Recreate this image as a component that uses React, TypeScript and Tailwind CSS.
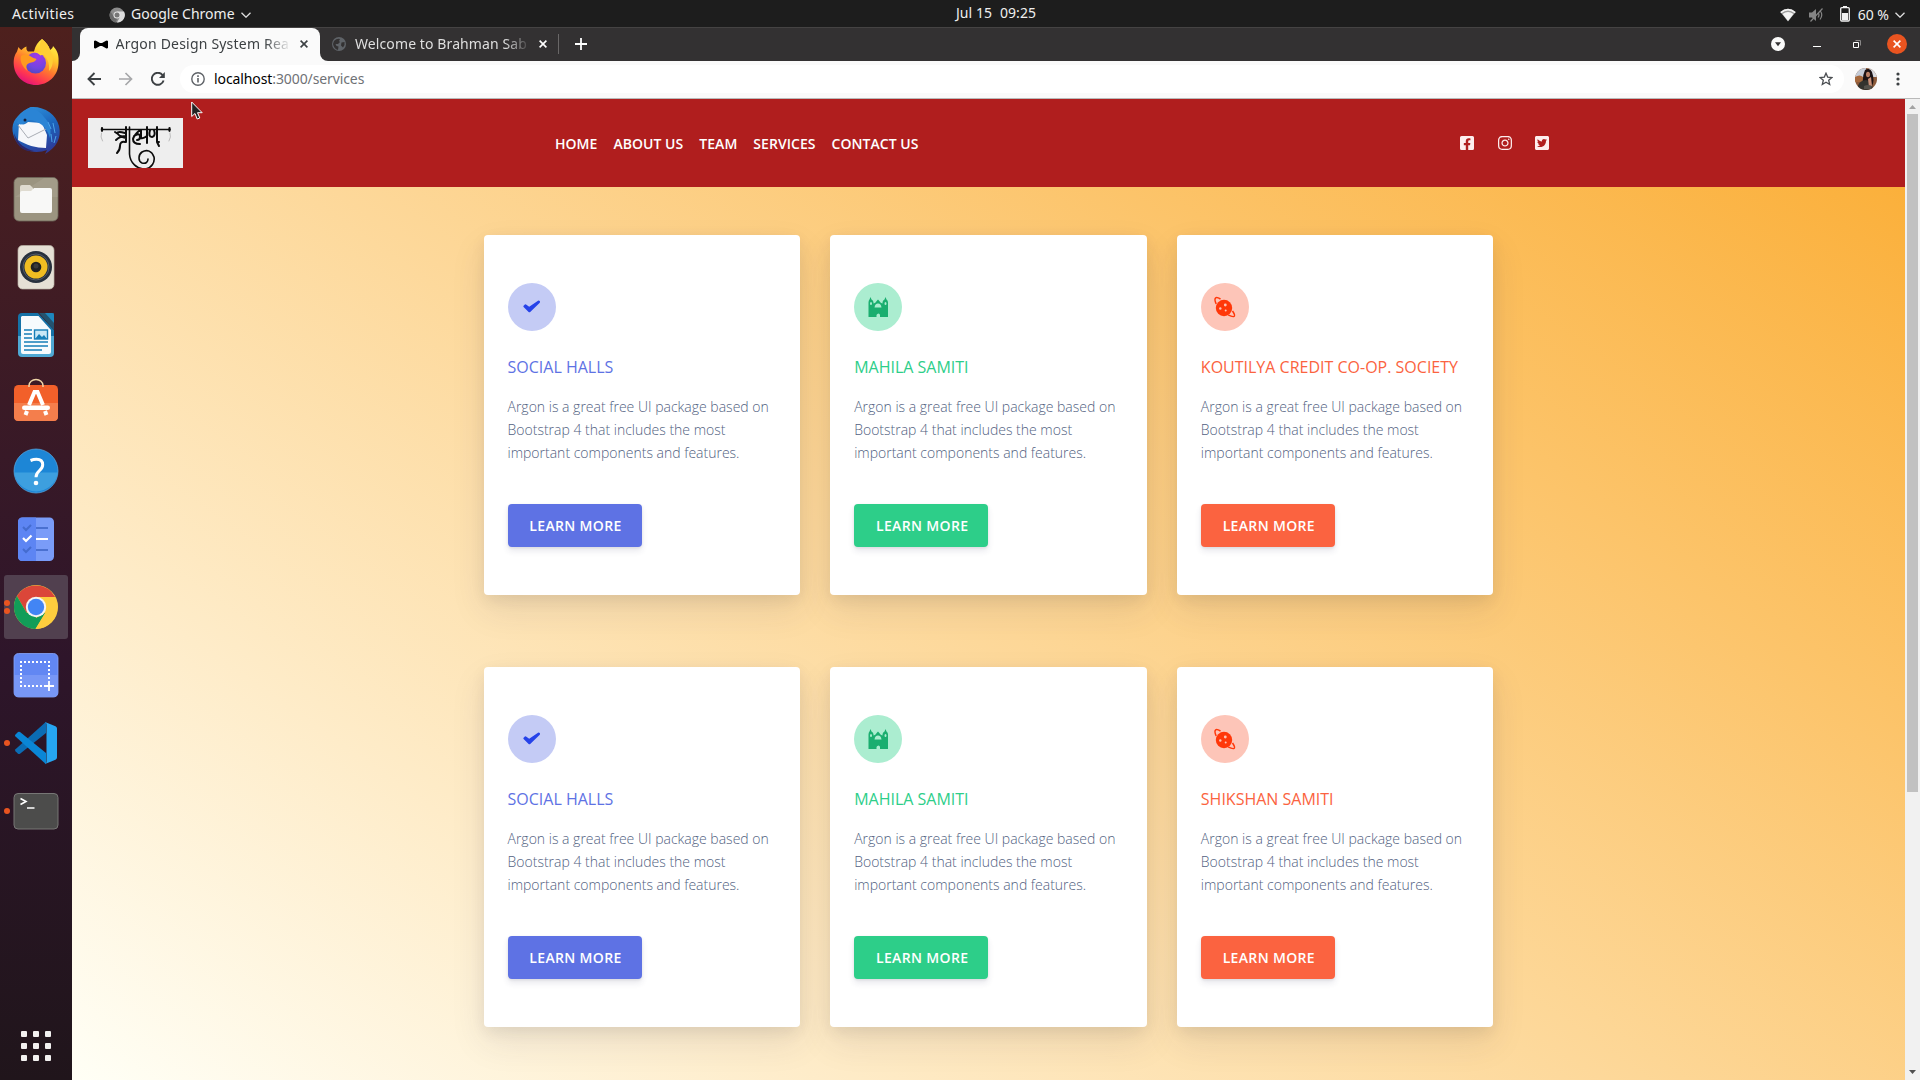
import React from "react";
import { FaFacebookSquare, FaInstagram, FaTwitterSquare } from "react-icons/fa";

const ui = "font-['Noto_Sans','Open_Sans',sans-serif]";

/* ---------- Dock icons (64 x 64 slots) ---------- */

const Firefox = () => (
  <>
    <defs>
      <linearGradient id="ffBody" x1="0.8" y1="0.05" x2="0.3" y2="1">
        <stop offset="0" stopColor="#fff24a" />
        <stop offset="0.3" stopColor="#ffc82c" />
        <stop offset="0.55" stopColor="#ff7a2e" />
        <stop offset="0.8" stopColor="#ff3750" />
        <stop offset="1" stopColor="#e1107e" />
      </linearGradient>
      <radialGradient id="ffCore" cx="0.6" cy="0.2" r="0.9">
        <stop offset="0" stopColor="#a238e8" />
        <stop offset="0.6" stopColor="#7245e0" />
        <stop offset="1" stopColor="#4c49b8" />
      </radialGradient>
    </defs>
    <path fill="url(#ffBody)" d="M38 8c4 3 7 7 8 11 2-1 3-3 3-4 5 5 6 10 5.500 17.500C54 45 44 54 32 54S10 45 9.700 32.500c-.1-6 1.300-9 3.300-12L14.500 16c1 1.500 2 2.500 3 3 1.500-1.700 3.500-3 5-3.500-.3 2 0 4 1.500 5h6c1.500-6 4-10 8-12.500z" />
    <circle cx="31.500" cy="32" r="10.500" fill="url(#ffCore)" />
    <path fill="#ff9a1f" d="M17 25c4-2 8-1 9 0 2 1.500 5 2.500 6.500 3-1 3-5 3.500-7 4-3 .8-4 3.500-2 8-5-4-8-10-6.500-15z" />
    <path fill="#ffcf35" d="M30 21c5-1 9 0 11.500 3-2 0-4-.3-5 .5-2.500-2.200-4.500-3-6.500-3.500zM38 8c4 3 7 7 8 11 4 6 4 16-1 21 1-8-2-14-7-18-3-4-3-9 0-14z" />
  </>
);

const Thunderbird = () => (
  <>
    <defs>
      <linearGradient id="tbBody" x1="0.2" y1="0" x2="0.6" y2="1">
        <stop offset="0" stopColor="#2f93dd" />
        <stop offset="0.5" stopColor="#1c66bd" />
        <stop offset="1" stopColor="#2e3a98" />
      </linearGradient>
    </defs>
    <path fill="url(#tbBody)" d="M27 8c13-1 25 7 28 19 3 12-3 22-14 28l2-4c-10 4-25 2-31-9C7 33 7 24 14 17c3-4 8-7 13-9z" />
    <path fill="#2e2768" d="M10 34c4 12 12 16 20 18-9 2-19-5-20-18z" />
    <path fill="#f6f7fa" d="M15 24c3 2 6 2 9-1l14 1 5 12-1 13c-10 0-20-3-28-8z" />
    <path fill="none" stroke="#a9adb5" strokeWidth="1" d="M14 26l10 13 18-9" />
    <path fill="#2a84d5" d="M27 8c5 3 10 5 13 10 5 5 8 11 6 21-2-7-6-13-13-16-5-2-9-3-11 0-3 3-7 3-9 1 1-7 7-13 14-16z" />
    <circle cx="21" cy="21" r="1.500" fill="#15203d" />
    <path fill="none" stroke="#4ba5e9" strokeWidth="1" d="M44 23l3 7m2-6l2 10m-4 1l1 8m4-6l-2 7" />
  </>
);

const Files = () => (
  <>
    <rect x="10" y="10.500" width="44" height="43.500" rx="5" fill="#9b9480" stroke="#6f6a5c" strokeWidth="0.8" />
    <path d="M11 30L40 11h9q4.500 0 4.500 4v15z" fill="#a9a28f" opacity="0.6" />
    <path fill="#dfdbd0" d="M16 20q0-2 2-2h8l3 3v6H16z" />
    <path fill="#f8f8f7" d="M16 26q0-2 2-2h9l3-3h16q2 0 2 2v21q0 2-2 2H18q-2 0-2-2z" />
  </>
);

const Speaker = () => (
  <>
    <rect x="14" y="10.500" width="36" height="43.500" rx="4.500" fill="#e5e0d5" stroke="#b9b3a6" strokeWidth="0.7" />
    <circle cx="32" cy="32" r="16" fill="#27303d" />
    <circle cx="32" cy="32" r="13" fill="none" stroke="#545c68" strokeWidth="1" />
    <circle cx="32" cy="32" r="11.500" fill="#f0bd22" />
    <circle cx="32" cy="32" r="5.300" fill="#222" />
    <circle cx="32" cy="31" r="2.500" fill="#3b3b3b" />
  </>
);

const Writer = () => (
  <>
    <path fill="#1572a7" d="M18 10h16l16 17v9H14V14q0-4 4-4z" />
    <path fill="#4fa9d4" d="M14 33h36v17q0 4-4 4H18q-4 0-4-4z" />
    <path fill="#24536f" d="M35 10l15 17V10z" />
    <path fill="#1e87be" d="M41 10h7q2 0 2 2v8z" />
    <path fill="#f7fbfd" d="M18 13h16.500L47 27v22q0 2-2 2H19q-2 0-2-2V14z" />
    <path stroke="#167fb8" strokeWidth="1.700" d="M20 27h8m-8 4h8m-8 4h8m-8 4h24m-24 4h24m-24 4h18" />
    <rect x="30.500" y="27" width="13" height="9" fill="#c9e8f6" stroke="#167fb8" strokeWidth="1.400" />
    <path fill="#167fb8" d="M31 36l4-5 3 3 2-2 3 4z" />
  </>
);

const Software = () => (
  <>
    <rect x="10" y="14" width="44" height="36" rx="4.500" fill="#f2602a" />
    <path fill="#f47e4c" d="M10 32h44v13.500q0 4.500-4.500 4.500h-35Q10 50 10 45.500z" />
    <path fill="none" stroke="#f0d6a8" strokeWidth="1.500" d="M25 16v-1.500a7 6 0 0 1 14 0V16" />
    <path fill="none" stroke="#fff" strokeWidth="4" d="M21.500 44l1.500-4M25 34l5.500-13h3L39 34m2 6l1.500 4" />
    <rect x="18" y="34.500" width="28" height="4.500" rx="2.200" fill="#fff" />
  </>
);

const Help = () => (
  <>
    <circle cx="32" cy="32" r="22" fill="#1d86d6" stroke="#57aae5" strokeWidth="0.7" />
    <path fill="#3d9fdf" d="M10.200 33.500h43.600a22 22 0 0 1-43.600 0z" />
    <path fill="none" stroke="#fff" strokeWidth="3" d="M26.500 21.500q3-1.200 6-1.200 6.200 0 6.200 5.500 0 3.200-3.500 6-3.200 2.600-3.200 6.500" />
    <circle cx="32" cy="44" r="2.300" fill="#fff" />
  </>
);

const Todo = () => (
  <>
    <rect x="14" y="10.500" width="36" height="43.500" rx="4.500" fill="#7a9cf8" />
    <path fill="#5d85f3" d="M18.500 10.500H32V54H18.500Q14 54 14 49.500V15q0-4.500 4.500-4.500z" />
    <path fill="none" stroke="#3f65c5" strokeWidth="2" d="M19 20l3 3 5-5m-8 24l3 3 5-5M32 21h12M32 43h12" opacity="0.8" />
    <path fill="none" stroke="#fff" strokeWidth="2.200" d="M19 31l3 3 5.500-5.500M32 32h12" />
  </>
);

const Chrome = () => (
  <>
    <circle cx="32" cy="32" r="22" fill="#fdcd3e" />
    <path fill="#db4639" d="M32 32L22.500 37.500 12.900 21A22 22 0 0 1 51.100 22H32z" />
    <path fill="#129d58" d="M12.900 21l9.600 16.500L32 42l-.5 12A22 22 0 0 1 12.900 21z" />
    <path fill="#129d58" d="M22.500 37.500L32 43l9.500-5.500L31.500 54z" />
    <path fill="#fdcd3e" d="M51.100 22A22 22 0 0 1 31.500 54l10-16.500V22z" />
    <circle cx="32" cy="32" r="10.200" fill="#f4f4f4" />
    <circle cx="32" cy="32" r="8.200" fill="#4285f4" />
  </>
);

const Screenshot = () => (
  <>
    <rect x="10" y="10.500" width="44" height="43.500" rx="4.500" fill="#6287f3" stroke="#86a4fa" strokeWidth="0.8" />
    <path fill="#7897f6" d="M10 32h44v17.500Q54 54 49.500 54h-35Q10 54 10 49.500z" />
    <path stroke="#fff" strokeWidth="2" strokeDasharray="2 2" fill="none" d="M16 19h30M17 22v22M45 22v16M16 43h24" />
    <path stroke="#fff" strokeWidth="1.800" d="M45 38v10m-5-5h10" />
  </>
);

const VSCode = () => (
  <>
    <path fill="#0b6cb4" d="M42 10.800L11.500 38.200q-1 1 0 2l2.500 2.500q1 .6 2 0L42 22z" />
    <path fill="#0a86d6" d="M42 53.200L11.500 25.500q-1-1 0-2L14 21q1-.7 2 0l26 21z" />
    <path fill="#26a6f2" d="M41 11l10.500 4.300q1.500.7 1.500 2.200v29q0 1.500-1.500 2.200L41 53q1.500-.5 1.500-2.500v-37Q42.500 11.500 41 11z" />
  </>
);

const Terminal = () => (
  <>
    <rect x="10" y="14.500" width="44" height="35.500" rx="4" fill="#4c4c4b" stroke="#777675" strokeWidth="1" />
    <path fill="none" stroke="#fff" strokeWidth="1.600" d="M16.500 19.500l5.500 3-5.500 3M23 29h7.500" />
  </>
);

const dock: { name: string; Art: () => React.ReactElement; dots: number; active?: boolean }[] = [
  { name: "Firefox", Art: Firefox, dots: 0 },
  { name: "Thunderbird", Art: Thunderbird, dots: 0 },
  { name: "Files", Art: Files, dots: 0 },
  { name: "Rhythmbox", Art: Speaker, dots: 0 },
  { name: "Writer", Art: Writer, dots: 0 },
  { name: "Software", Art: Software, dots: 0 },
  { name: "Help", Art: Help, dots: 0 },
  { name: "To Do", Art: Todo, dots: 0 },
  { name: "Chrome", Art: Chrome, dots: 2, active: true },
  { name: "Screenshot", Art: Screenshot, dots: 0 },
  { name: "Code", Art: VSCode, dots: 1 },
  { name: "Terminal", Art: Terminal, dots: 1 },
];

function Dock() {
  return (
    <aside className="flex w-[72px] shrink-0 flex-col items-center justify-between bg-linear-to-b from-[#4e201d] via-[#2e152a] via-60% to-[#20151b] pt-1 pb-[19px]">
      <div className="flex flex-col gap-1">
        {dock.map(({ name, Art, dots, active }) => (
          <div
            key={name}
            className={
              active ? "relative size-16 rounded-[3px] bg-[#51404f]" : "relative size-16"
            }
          >
            <svg viewBox="0 0 64 64" className="size-16" aria-label={name}>
              <Art />
            </svg>
            {dots > 0 && (
              <div className="absolute inset-y-0 left-0 flex flex-col justify-center gap-[2px]">
                {Array.from({ length: dots }, (_, i) => (
                  <span key={i} className="size-1.5 rounded-full bg-[#e95420]" />
                ))}
              </div>
            )}
          </div>
        ))}
      </div>
      <div className="grid grid-cols-3 gap-1.5">
        {Array.from({ length: 9 }, (_, i) => (
          <span key={i} className="size-1.5 rounded-[1px] bg-[#f2f1f0]" />
        ))}
      </div>
    </aside>
  );
}

/* ---------- Desktop top bar ---------- */

const Chevron = ({ className }: { className: string }) => (
  <svg viewBox="0 0 10 6" className={className} fill="none" stroke="#dedede" strokeWidth="1.300">
    <path d="M.5.7L5 5.200 9.500.7" />
  </svg>
);

function TopBar() {
  return (
    <header
      className={`grid h-[27px] grid-cols-[1fr_auto_1fr] items-center bg-[#1d1d1d] text-[14px] leading-[25px] text-[#efefef] ${ui}`}
    >
      <div className="flex items-center pl-3">
        <span className="w-[97px] pb-[2px] tracking-[0.4px]">Activities</span>
        <svg viewBox="0 0 16 16" className="mr-1.5 size-4">
          <circle cx="8" cy="8" r="7.500" fill="#8c8c8c" />
          <path d="M8 4.500h7A7.500 7.500 0 0 1 8 15.500l3-5.500z" fill="#dcdcdc" />
          <path d="M1.500 4.500L5 10l3 1.500-1 4A7.500 7.500 0 0 1 1.500 4.500z" fill="#6b6b6b" />
          <circle cx="8" cy="8" r="3.500" fill="#e6e6e6" />
          <circle cx="8" cy="8" r="2.500" fill="#777" />
        </svg>
        <span className="pb-[2px] tracking-[0.02px]">Google Chrome</span>
        <Chevron className="ml-1.5 h-1.5 w-2.5" />
      </div>
      <div className="relative left-[36px] flex gap-2 pb-1 tracking-[0.05px]">
        <span>Jul 15</span>
        <span>09:25</span>
      </div>
      <div className="flex items-center justify-end pr-[15px]">
        <svg viewBox="0 0 16 14" className="mr-[13px] h-3.5 w-4">
          <path d="M.3 4Q8-2.500 15.700 4L8 13.500z" fill="#9a9a9a" />
          <path d="M.3 4Q8-2.500 15.700 4l-1 1.200Q8 0 1.300 5.200z" fill="#f2f2f2" />
          <path d="M2.500 6Q8 2 13.500 6L8 13z" fill="#f2f2f2" />
        </svg>
        <svg viewBox="0 0 15 14" className="mr-4 h-3.5 w-[15px]">
          <path d="M0 4.500h3L7 1v12L3 9.500H0z" fill="#858585" />
          <path d="M9 4.500q2 2.500 0 5M11 2.500q3.500 4.500 0 9M1.500 13.500L13.500.5" fill="none" stroke="#858585" strokeWidth="1.200" />
        </svg>
        <svg viewBox="0 0 10 16" className="mr-2 mb-[2px] h-4 w-2.5">
          <path d="M3 0h4v1.500H3z" fill="#f2f2f2" />
          <rect x=".7" y="1.700" width="8.600" height="13.300" rx="1" fill="none" stroke="#f2f2f2" strokeWidth="1.300" />
          <path d="M2 7h6v7H2z" fill="#f2f2f2" />
        </svg>
        <span className="pb-px">60 %</span>
        <Chevron className="ml-1.5 h-1.5 w-2.5" />
      </div>
    </header>
  );
}

/* ---------- Browser chrome ---------- */

const Cross = ({ className }: { className: string }) => (
  <svg viewBox="0 0 8 8" className={className} fill="none" stroke="currentColor" strokeWidth="1.600">
    <path d="M.6.6l6.800 6.800M7.400.6L.6 7.400" />
  </svg>
);

function TabStrip() {
  return (
    <div
      className={`flex h-[34px] items-stretch border-t border-[#454343] bg-[#333132] text-[14px] ${ui}`}
    >
      <div className="flex w-2 items-end bg-[#fafafa]">
        <span className="h-full w-2 rounded-br-lg bg-[#333132]" />
      </div>
      <div className="flex w-60 items-center rounded-t-lg bg-[#fafafa] pb-px pl-[13.500px] text-[#3c4043]">
        <svg viewBox="0 0 14 9" className="h-[9px] w-3.5 shrink-0">
          <path d="M0 1.200Q.6 0 2 .7L6 3h2l4-2.300Q13.400 0 14 1.200v6.600q-.6 1.200-2 .5L8 6H6L2 8.300Q.6 9 0 7.800z" fill="#000" />
        </svg>
        <span className="mr-[9px] ml-2 w-[175px] whitespace-nowrap pb-px tracking-[0.2px] mask-r-from-85% mask-r-to-100%">
          Argon Design System Rea
        </span>
        <Cross className="size-2 shrink-0 text-[#3c4043]" />
      </div>
      <div className="flex w-2 items-end bg-[#fafafa]">
        <span className="h-full w-2 rounded-bl-lg bg-[#333132]" />
      </div>
      <div className="flex items-center pb-px pl-1 text-[#dfdfdf]">
        <svg viewBox="0 0 14 14" className="size-3.5">
          <circle cx="7" cy="7" r="7" fill="#5f6368" />
          <path d="M2 4q3-3 6-2l-1 2 1 1-2 2H3.500l1 2 2 .5L6 13Q2 12 1 7zM9.500 5.500l3-.5q.8 3-1.500 5.500l-2-2z" fill="#333132" />
        </svg>
        <span className="mr-2 ml-[9px] w-[176px] whitespace-nowrap pb-px tracking-[0.1px] mask-r-from-85% mask-r-to-100%">
          Welcome to Brahman Sab
        </span>
        <Cross className="size-2 text-white" />
        <span className="ml-[11px] h-5 w-px bg-[#696767]" />
        <svg viewBox="0 0 12 12" className="ml-4 size-3" stroke="#fff" strokeWidth="1.800">
          <path d="M6 0v12M0 6h12" />
        </svg>
      </div>
      <div className="ml-auto flex items-center pr-[13px] pb-px">
        <svg viewBox="0 0 14 14" className="mr-7 size-3.5">
          <circle cx="7" cy="7" r="7" fill="#fafafa" />
          <path d="M4 5.200h6L7 9.300z" fill="#333132" />
        </svg>
        <span className="relative top-[2px] mr-8 h-px w-2 bg-white" />
        <svg viewBox="0 0 8 8" className="mr-[26px] size-2" fill="none">
          <path d="M2.500.5h5v5" stroke="#8a8888" />
          <path d="M.5 2.500h5v5h-5z" stroke="#fff" />
        </svg>
        <span className="flex size-5 items-center justify-center rounded-full bg-[#e95420] text-white">
          <Cross className="size-2" />
        </span>
      </div>
    </div>
  );
}

function Toolbar() {
  return (
    <div className="flex h-[38px] items-center border-b border-[#b9b9b9] bg-[#fafafa] pb-px pl-[15px] pr-5">
      <svg viewBox="0 0 14 14" className="size-3.5" fill="none" stroke="#3c4043" strokeWidth="1.900">
        <path d="M14 7H1.500M7.500 1l-6 6 6 6" />
      </svg>
      <svg viewBox="0 0 14 14" className="ml-[18px] size-3.5" fill="none" stroke="#a6a7a9" strokeWidth="1.700">
        <path d="M0 7h12.500M6.500 1l6 6-6 6" />
      </svg>
      <svg viewBox="0 0 14 14" className="ml-[18px] size-3.5" fill="none" stroke="#3c4043" strokeWidth="1.900">
        <path d="M12.600 8.500A6 6 0 1 1 11.500 3l1 1.200" />
        <path d="M13.800 0v6H8z" fill="#3c4043" stroke="none" />
      </svg>
      <div className="ml-[15px] flex h-7 grow items-center rounded-full bg-white pl-[11px] pr-[11px]">
        <svg viewBox="0 0 14 14" className="size-3.5" fill="none" stroke="#5f6368" strokeWidth="1.400">
          <circle cx="7" cy="7" r="6.200" />
          <path d="M7 6v4.500M7 3.300v1.600" strokeWidth="1.600" />
        </svg>
        <span className={`ml-[9px] pb-px text-[14px] tracking-[-0.1px] text-[#6f7276] ${ui}`}>
          <span className="text-black">localhost</span>:3000/services
        </span>
        <svg viewBox="0 0 14 14" className="ml-auto size-3.5" fill="none" stroke="#4a4d51" strokeWidth="1.300">
          <path d="M7 1.200l1.700 3.900 4.200.4-3.200 2.800 1 4.200L7 10.300l-3.700 2.200 1-4.200L1.100 5.500l4.200-.4z" />
        </svg>
      </div>
      <svg viewBox="0 0 22 22" className="ml-[11px] size-[22px]">
        <defs>
          <clipPath id="avatarClip">
            <circle cx="11" cy="11" r="11" />
          </clipPath>
        </defs>
        <g clipPath="url(#avatarClip)">
          <rect width="22" height="22" fill="#8b5a3a" />
          <path d="M0 0h11v9H0z" fill="#c5ccd8" />
          <path d="M14 0h8v9h-8z" fill="#d9dbe0" />
          <path d="M0 9q5-3 8 0v5H0z" fill="#a5683c" />
          <path d="M10 2q5-3 7 2 3 9 0 14H8Q7 8 10 2z" fill="#1c1214" />
          <path d="M2 22q1-10 9-10 6 0 7 10z" fill="#34332e" />
          <ellipse cx="13" cy="6.500" rx="2" ry="2.800" fill="#b98067" />
          <path d="M13 11l3-2 1 9-3 1z" fill="#c99078" />
          <path d="M9 18q4-2 8 0l-1 3H9z" fill="#55524b" />
        </g>
      </svg>
      <svg viewBox="0 0 4 14" className="ml-[19px] h-3.5 w-1" fill="#3c4043">
        <circle cx="2" cy="2" r="1.600" />
        <circle cx="2" cy="7" r="1.600" />
        <circle cx="2" cy="12" r="1.600" />
      </svg>
    </div>
  );
}

/* ---------- Site ---------- */

function Logo() {
  return (
    <svg viewBox="0 0 95 50" className="h-[50px] w-[95px] bg-[#eeeeee]" fill="none" stroke="#0c0c0c" strokeLinecap="round" strokeLinejoin="round">
      <path d="M13.500 11.500H82" strokeWidth="1.500" />
      <path d="M14 10.200v2.600M81.500 10.200v2.600" strokeWidth="2.200" />
      <path d="M13.500 15q-1.500 4 1 8M82 15q1.500 4-1 8" stroke="#b5b5b5" strokeWidth="0.900" />
      <path d="M38 9v15M37 15q-7-2-8 0 3 4 9 5M27 14l3 2M28 22q4-4 10-4M37 24q-5-1-5 4 0 4-3 7" strokeWidth="2" />
      <path d="M41.500 9v27C42 45 49 51 57 51c7-1 10-7 9-12-2-6-7-8-12-5-4 3-4 9 0 11 4 1 6-1 6-4" strokeWidth="1.600" />
      <path d="M52 12q-6 5-7 9 0 5 7 5M46 18q6-4 6 1 0 3-3 3M53 12v8q2 1 6-2M59 9v16" strokeWidth="2" />
      <path d="M62 12q-2 7 2 7 4-1 2-7M69 9v15l2 4M69 24h2" strokeWidth="2" />
    </svg>
  );
}

function SiteNav() {
  return (
    <nav className="flex h-[88px] shrink-0 items-center bg-[#b01e1e] pl-4 text-[14px] font-semibold text-white">
      <div className="w-[467px]">
        <Logo />
      </div>
      <div className="flex w-[904px] gap-4 whitespace-nowrap tracking-[0.04px]">
        <span>HOME</span>
        <span>ABOUT US</span>
        <span>TEAM</span>
        <span>SERVICES</span>
        <span>CONTACT US</span>
      </div>
      <div className="flex gap-[21.600px] pb-px text-[16px] text-[#fdeeee]">
        <FaFacebookSquare />
        <FaInstagram />
        <FaTwitterSquare />
      </div>
    </nav>
  );
}

const CheckArt = () => (
  <svg viewBox="0 0 24 24" className="size-6">
    <path d="M3.600 10.700l1.300-1.200q.5-.4 1.100 0l3.200 2.200 8.800-6q1-.5 1.700.3t.1 1.700l-9.600 9.200q-.8.700-1.600 0L3.600 12q-.6-.7 0-1.300z" fill="#2643e9" />
  </svg>
);

const CastleArt = () => (
  <svg viewBox="0 0 24 24" className="size-6">
    <path
      d="M4.500 2l1 2.500q2 1 2 3v1Q9 8 9.500 7.500q1.500-2 2.500-3 1 1 2.500 3 .5.500 2 1v-1q0-2 2-3l1-2.500 1 2.500q1.500 1 1.500 3V22h-8v-2q-.2-1.500-1.500-1.500T10.500 20v2h-8V7.500q0-2 1-3z"
      fill="#1aae6f"
    />
    <path d="M8.500 12.500q.5-4 3.500-4t3.500 4z" fill="#abedd0" />
    <path d="M4 8.500q0-1.500 1-1.500t1 1.500-1 1.500-1-1.500zM18.500 8.500q0-1.500 1-1.500t1 1.500-1 1.500-1-1.500z" fill="#abedd0" />
  </svg>
);

const PlanetArt = () => (
  <svg viewBox="0 0 24 24" className="size-6">
    <circle cx="11" cy="13" r="8.200" fill="#ff3709" />
    <path d="M3.200 9Q1 4 2.700 2.800 4 2 7.500 4M19.500 16q3 4.300 1.600 5.400-1.500.8-6-1.500" fill="none" stroke="#ff3709" strokeWidth="1.500" />
    <circle cx="12.300" cy="10" r="1.400" fill="#fdc5b8" />
    <circle cx="7.300" cy="13.500" r="1.200" fill="#fdc5b8" />
    <circle cx="12.700" cy="15.500" r="1" fill="#fdc5b8" />
  </svg>
);

const tones = {
  primary: { badge: "bg-[#c4cbf5]", title: "text-[#5e72e4]", button: "bg-[#5e72e4]", Art: CheckArt },
  success: { badge: "bg-[#abedd0]", title: "text-[#2dce89]", button: "bg-[#2dce89]", Art: CastleArt },
  warning: { badge: "bg-[#fdc5b8]", title: "text-[#fb6340]", button: "bg-[#fb6340]", Art: PlanetArt },
};

const services: { title: string; tone: keyof typeof tones }[] = [
  { title: "SOCIAL HALLS", tone: "primary" },
  { title: "MAHILA SAMITI", tone: "success" },
  { title: "KOUTILYA CREDIT CO-OP. SOCIETY", tone: "warning" },
  { title: "SOCIAL HALLS", tone: "primary" },
  { title: "MAHILA SAMITI", tone: "success" },
  { title: "SHIKSHAN SAMITI", tone: "warning" },
];

function ServiceCard({ title, tone }: { title: string; tone: keyof typeof tones }) {
  const { badge, title: titleColor, button, Art } = tones[tone];
  return (
    <article className="flex h-[360px] flex-col items-start rounded bg-white px-6 py-12 shadow-[0_15px_35px_rgba(50,50,93,0.1),0_5px_15px_rgba(0,0,0,0.07)]">
      <div className={`flex size-12 shrink-0 items-center justify-center rounded-full ${badge}`}>
        <Art />
      </div>
      <h6 className={`mt-6 text-[16px] leading-6 whitespace-nowrap ${titleColor}`}>{title}</h6>
      <p className="mt-4 text-[14px] leading-[23px] font-light text-[#525f7f]">
        Argon is a great free UI package based on Bootstrap 4 that includes the most important
        components and features.
      </p>
      <button
        className={`mt-auto h-[43px] w-[134px] rounded pl-[2px] text-[14px] font-semibold tracking-[0.35px] whitespace-nowrap text-white shadow-[0_4px_6px_rgba(50,50,93,0.11),0_1px_3px_rgba(0,0,0,0.08)] ${button}`}
      >
        LEARN MORE
      </button>
    </article>
  );
}

function Scrollbar() {
  return (
    <div className="flex w-[15px] shrink-0 flex-col items-center bg-[#f1f1f1] pt-1.5">
      <svg viewBox="0 0 7 4" className="h-1 w-[7px]" fill="#a3a3a3">
        <path d="M3.500 0L7 4H0z" />
      </svg>
      <div className="mt-[5px] h-[678px] w-[11px] bg-[#c1c1c1]" />
      <svg viewBox="0 0 7 4" className="mt-auto mb-1.5 h-1 w-[7px]" fill="#505050">
        <path d="M3.500 4L7 0H0z" />
      </svg>
    </div>
  );
}

export default function App() {
  return (
    <div className="relative flex h-[1080px] w-[1920px] flex-col overflow-hidden">
      <TopBar />
      <div className="flex min-h-0 grow">
        <Dock />
        <div className="flex min-w-0 grow flex-col">
          <TabStrip />
          <Toolbar />
          <div className="flex min-h-0 grow">
            <main className="flex grow flex-col font-['Open_Sans',sans-serif]">
              <SiteNav />
              <section className="flex grow justify-center bg-[linear-gradient(35deg,#fffff6,#fbb03b)] pt-12">
                <div className="grid w-[1010px] grid-cols-3 content-start gap-x-[30px] gap-y-[72px]">
                  {services.map((s, i) => (
                    <ServiceCard key={i} {...s} />
                  ))}
                </div>
              </section>
            </main>
            <Scrollbar />
          </div>
        </div>
      </div>
      <svg viewBox="0 0 12 19" className="absolute top-[101px] left-[191px] h-[19px] w-3">
        <path d="M.7 1v14.500l3.300-3 2.200 5.500 2.600-1-2.300-5.300h4.700z" fill="#222" stroke="#fff" strokeWidth="1" />
      </svg>
    </div>
  );
}
